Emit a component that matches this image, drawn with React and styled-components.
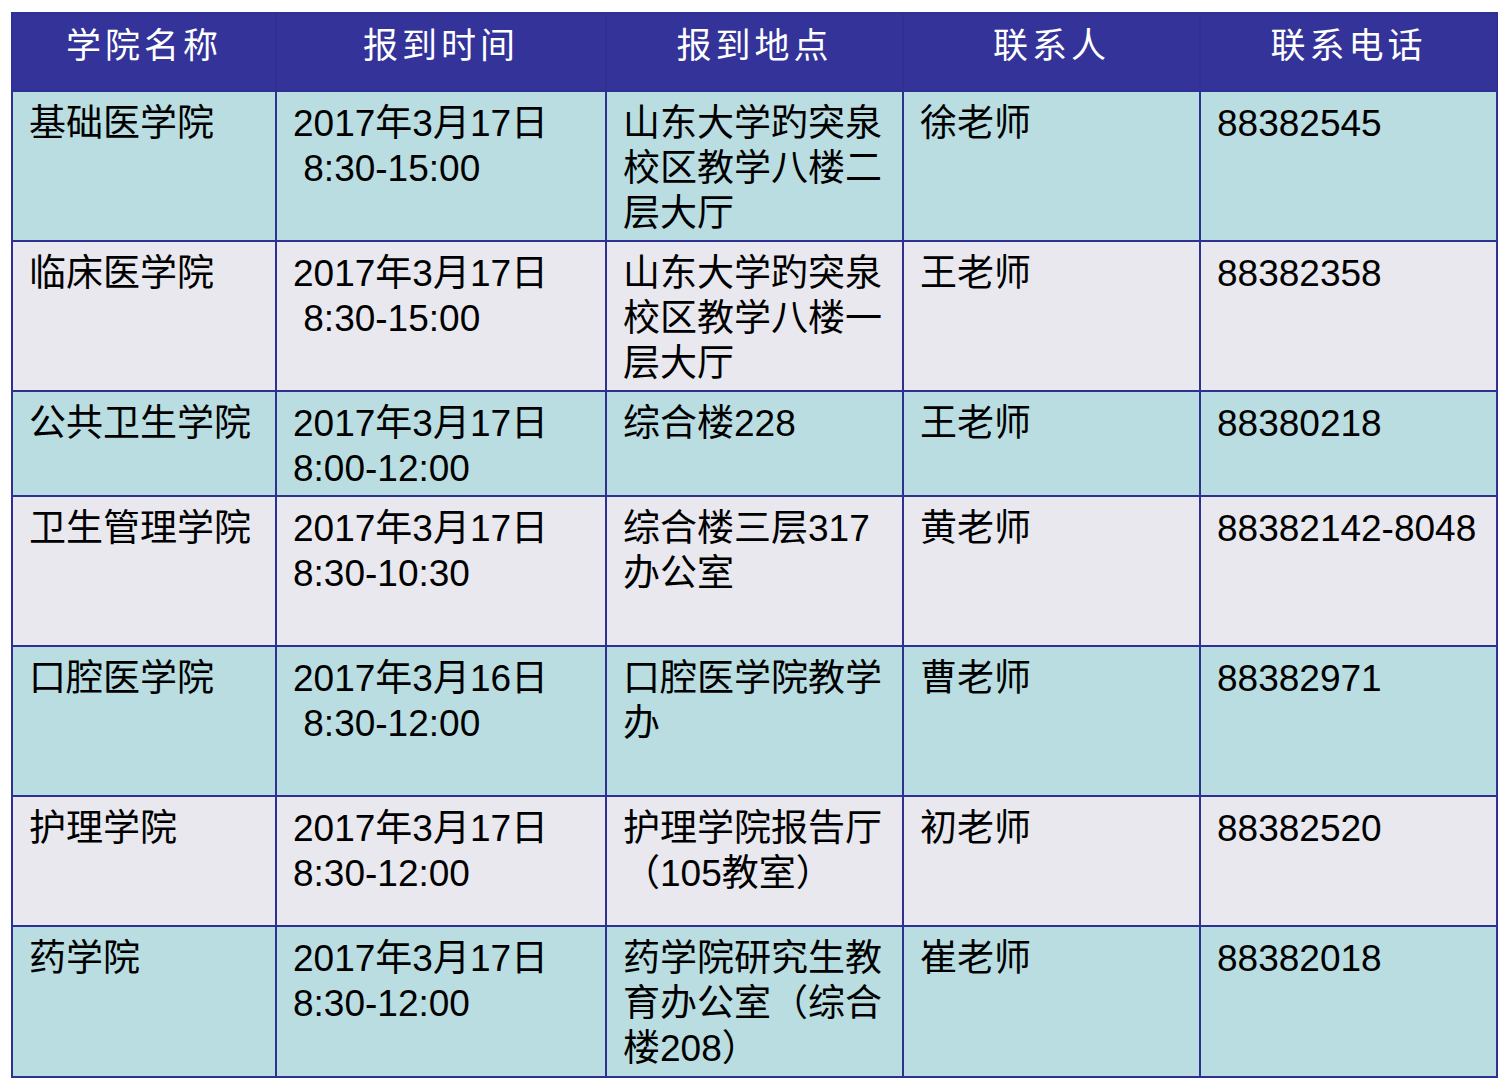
import React from "react";
import styled, { createGlobalStyle } from "styled-components";

const GlobalStyle = createGlobalStyle`
  body {
    margin: 0;
    background: #ffffff;
    font-family: "Liberation Sans", "Noto Sans CJK SC", sans-serif;
  }
`;

const columns = ["学院名称", "报到时间", "报到地点", "联系人", "联系电话"];

const rows = [
  {
    height: 148,
    cells: [["基础医学院"], ["2017年3月17日", " 8:30-15:00"], ["山东大学趵突泉", "校区教学八楼二", "层大厅"], ["徐老师"], ["88382545"]],
  },
  {
    height: 148,
    cells: [["临床医学院"], ["2017年3月17日", " 8:30-15:00"], ["山东大学趵突泉", "校区教学八楼一", "层大厅"], ["王老师"], ["88382358"]],
  },
  {
    height: 103,
    cells: [["公共卫生学院"], ["2017年3月17日", "8:00-12:00"], ["综合楼228"], ["王老师"], ["88380218"]],
  },
  {
    height: 148,
    cells: [["卫生管理学院"], ["2017年3月17日", "8:30-10:30"], ["综合楼三层317", "办公室"], ["黄老师"], ["88382142-8048"]],
  },
  {
    height: 148,
    cells: [["口腔医学院"], ["2017年3月16日", " 8:30-12:00"], ["口腔医学院教学", "办"], ["曹老师"], ["88382971"]],
  },
  {
    height: 128,
    cells: [["护理学院"], ["2017年3月17日", "8:30-12:00"], ["护理学院报告厅", "（105教室）"], ["初老师"], ["88382520"]],
  },
  {
    height: 149,
    cells: [["药学院"], ["2017年3月17日", "8:30-12:00"], ["药学院研究生教", "育办公室（综合", "楼208）"], ["崔老师"], ["88382018"]],
  },
];

const Page = styled.div`
  padding: 12px 0 0 11px;
`;

const Table = styled.div`
  display: grid;
  grid-template-columns: 262px 328px 295px 295px 295px;
  grid-template-rows: ${(p) => p.$rows};
  gap: 2px;
  width: max-content;
  background: #2f3192;
  border: 2px solid #2f3192;
`;

const HeadCell = styled.div`
  background: #333399;
  color: #ffffff;
  display: flex;
  align-items: center;
  justify-content: center;
  font-family: "Noto Sans CJK SC", sans-serif;
  font-size: 35px;
  letter-spacing: 4px;
  padding-bottom: 20px;
`;

const Cell = styled.div`
  background: ${(p) => (p.$alt ? "#e8e8ee" : "#b9dde0")};
  color: #000000;
  font-size: 37px;
  line-height: 45px;
  padding: 9px 10px 0 16px;
  white-space: pre;
  font-family: "Liberation Sans", "Noto Sans CJK SC", sans-serif;
`;

const Line = styled.div`
  height: 45px;
`;

export default function App() {
  const template = ["76px", ...rows.map((r) => `${r.height}px`)].join(" ");
  return (
    <Page>
      <GlobalStyle />
      <Table $rows={template}>
        {columns.map((c) => (
          <HeadCell key={c}>{c}</HeadCell>
        ))}
        {rows.map((row, i) =>
          row.cells.map((lines, j) => (
            <Cell key={`${i}-${j}`} $alt={i % 2 === 1}>
              {lines.map((l, k) => (
                <Line key={k}>{l}</Line>
              ))}
            </Cell>
          ))
        )}
      </Table>
    </Page>
  );
}
